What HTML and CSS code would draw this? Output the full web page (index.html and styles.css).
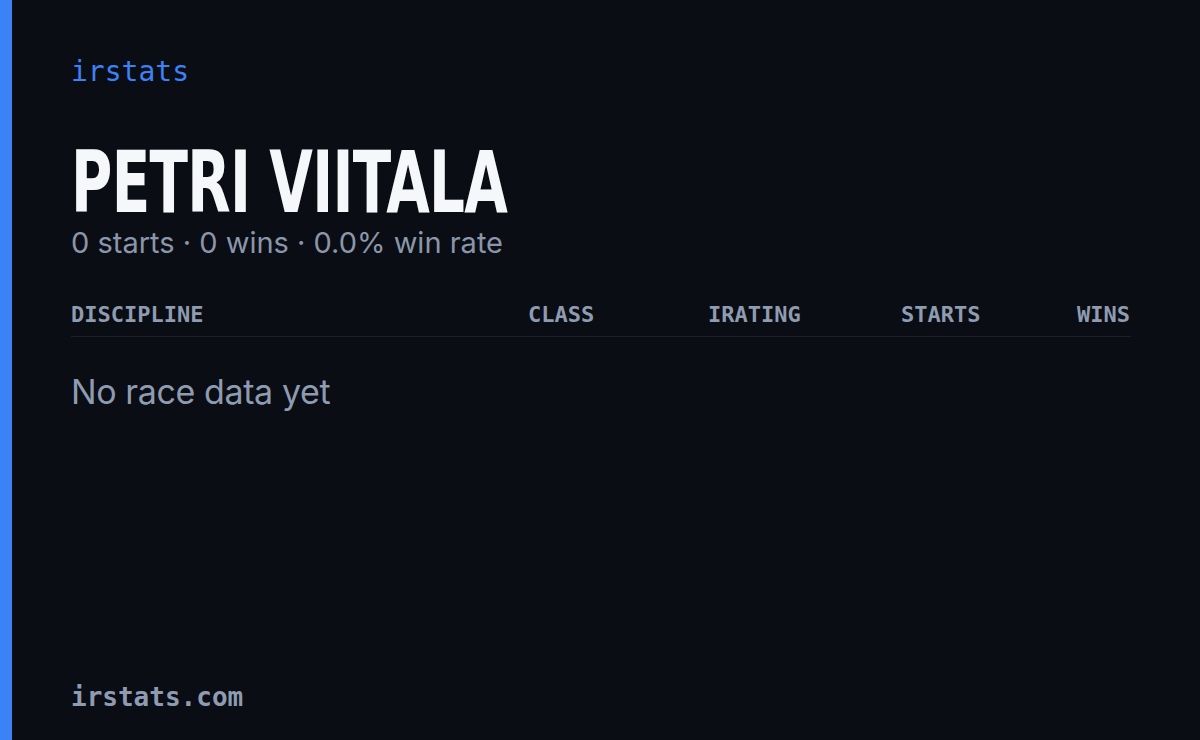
FILE: index.html
```html
<!DOCTYPE html>
<html>
<head>
    <title>Petri Viitala - irstats</title>
    <link rel="stylesheet" href="styles.css">
</head>
<body>
    <div class="card">
        <div class="accent"></div>
        <div class="content">
            <div class="brand">irstats</div>

            <h1 class="driver-name">PETRI VIITALA</h1>
            <div class="summary">0 starts · 0 wins · 0.0% win rate</div>

            <div class="table-head">
                <span>DISCIPLINE</span>
                <span>CLASS</span>
                <span>IRATING</span>
                <span>STARTS</span>
                <span>WINS</span>
            </div>
            <div class="empty">No race data yet</div>

            <div class="footer">irstats.com</div>
        </div>
    </div>
</body>
</html>
```

FILE: styles.css
```css
html, body {
    margin: 0;
    height: 100%;
}

body {
    background-color: #0a0d14;
    font-family: 'Inter', sans-serif;
    color: #94a0b4;
}

.card {
    display: flex;
    height: 740px;
}

.accent {
    width: 12px;
    background-color: #3b82f6;
}

.content {
    flex: 1;
    display: flex;
    flex-direction: column;
    padding: 56px 69px 28px 59px;
}

.brand {
    font-family: 'DejaVu Sans Mono', monospace;
    font-size: 28px;
    line-height: 32px;
    color: #3b82f6;
}

/* condensed display name: squeeze the bold face sideways */
.driver-name {
    margin: 58px 0 0;
    font-family: 'DejaVu Sans', sans-serif;
    font-weight: bold;
    font-size: 86px;
    line-height: 72px;
    letter-spacing: -1px;
    color: #f5f7fa;
    transform: scaleX(0.655);
    transform-origin: left center;
    white-space: nowrap;
}

.summary {
    margin-top: 7px;
    font-size: 29px;
    line-height: 36px;
    color: #8a96aa;
}

.table-head {
    display: grid;
    grid-template-columns: 457px 180px 193px 176px auto;
    margin-top: 41px;
    padding-bottom: 8px;
    border-bottom: 1px solid #1c202b;
    font-family: 'DejaVu Sans Mono', monospace;
    font-weight: bold;
    font-size: 22px;
    line-height: 26px;
    color: #8e9bb0;
}

.empty {
    margin-top: 35px;
    font-size: 34px;
    line-height: 40px;
    letter-spacing: -0.4px;
    color: #8e9bb0;
}

.footer {
    margin-top: auto;
    font-family: 'DejaVu Sans Mono', monospace;
    font-weight: bold;
    font-size: 26px;
    line-height: 30px;
    color: #8e9bb0;
}
```
